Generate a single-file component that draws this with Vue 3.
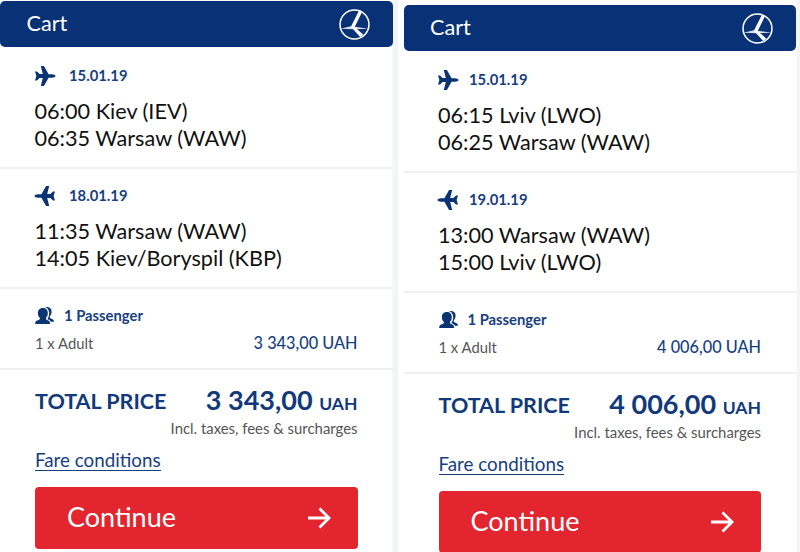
<template>
    <div class="page">
        <div v-for="cart in carts" :key="cart.id" class="cart">
            <div class="panel">
                <header class="head">
                    <span>Cart</span>
                    <svg class="logo" viewBox="0 0 30 30">
                        <circle cx="15" cy="15" r="14" fill="none" stroke="#fff" stroke-width="1.5" />
                        <path d="M19.3 1.8 L11.5 17.2 L20.5 27.2 L23.6 24.8 L15.2 17.4 L22.3 3 Z" fill="#fff" />
                        <path d="M1.5 19.2 L11.5 16.6 L17 17.4 L28.5 19.2 L14 19.6 Z" fill="#fff" opacity="0.85" />
                    </svg>
                </header>
                <section v-for="flight in cart.flights" :key="flight.date" class="flight">
                    <div class="label">
                        <svg class="plane" :class="{ back: flight.back }" viewBox="0 0 20 20">
                            <path :d="planePath" fill="#0b3475" />
                        </svg>
                        <span class="date">{{ flight.date }}</span>
                    </div>
                    <p v-for="stop in flight.stops" :key="stop">{{ stop }}</p>
                </section>
                <section class="passengers">
                    <div class="label">
                        <svg class="people" viewBox="0 0 19 17">
                            <path :d="backPersonPath" fill="#0b3475" />
                            <path :d="frontPersonPath" fill="#0b3475" />
                        </svg>
                        <span class="count">1 Passenger</span>
                    </div>
                    <div class="row">
                        <span class="adult">1 x Adult</span>
                        <span class="fare">{{ cart.price }} UAH</span>
                    </div>
                </section>
                <section class="total">
                    <div class="sum">
                        <span class="title">TOTAL PRICE</span>
                        <span class="amount">{{ cart.price }} <small>UAH</small></span>
                    </div>
                    <div class="note">Incl. taxes, fees &amp; surcharges</div>
                    <a class="conditions">Fare conditions</a>
                    <button class="continue">
                        <span>Continue</span>
                        <svg class="arrow" viewBox="0 0 24 22">
                            <path d="M1 11 H21.5 M12.5 1.5 L22 11 L12.5 20.5" fill="none" stroke="#fff" stroke-width="2.8" />
                        </svg>
                    </button>
                </section>
            </div>
        </div>
    </div>
</template>

<script setup>
import { ref } from "vue";

const carts = ref([
    {
        id: 1,
        price: "3 343,00",
        flights: [
            { date: "15.01.19", stops: ["06:00 Kiev (IEV)", "06:35 Warsaw (WAW)"] },
            { date: "18.01.19", back: true, stops: ["11:35 Warsaw (WAW)", "14:05 Kiev/Boryspil (KBP)"] },
        ],
    },
    {
        id: 2,
        price: "4 006,00",
        flights: [
            { date: "15.01.19", stops: ["06:15 Lviv (LWO)", "06:25 Warsaw (WAW)"] },
            { date: "19.01.19", back: true, stops: ["13:00 Warsaw (WAW)", "15:00 Lviv (LWO)"] },
        ],
    },
]);

const planePath =
    "M20.5 10 C20.5 10.9 18.5 11.7 17 11.7 H13.6 L8.9 20 H5.8 L7.8 12 H4.6 L2 14.6 H0 L1.4 10 L0 5.4 H2 L4.6 8 H7.8 L5.8 0 H8.9 L13.6 8.3 H17 C18.5 8.3 20.5 9.1 20.5 10 Z";
const frontPersonPath =
    "M8 0.9 C11.6 0.9 13 3.4 12.8 6.7 C12.7 8.9 11.6 10 10.9 11 C10.9 12.6 11.4 12.8 13.2 13.4 C14.7 13.9 15 15 15 17 H0.2 C0.2 15 0.6 13.9 2.1 13.4 C4.4 12.8 5 12.6 5 11 C3.8 10 3 8.7 2.9 6.5 C2.7 3.2 4.4 0.9 8 0.9 Z";
const backPersonPath =
    "M10.2 0.3 C13.6 -0.6 16.6 1 16.6 4.6 C16.6 7.2 15.6 8.6 14.6 9.8 C14.6 11 15.2 11.4 17 12 C18.5 12.6 18.9 13.3 18.9 14.8 H15.9 C15.2 12.9 13.5 12.6 12.4 12 C14.2 9 14.6 6.6 13.8 4 C13.2 2 11.8 0.8 10.2 0.3 Z";
</script>

<style>
body {
    background: #fff;
    overflow: hidden;
}
</style>

<style scoped>
.page {
    display: flex;
    align-items: flex-start;
    gap: 5.5px;
    width: 802px;
    height: 552px;
    overflow: hidden;
    font-family: Lato, "Open Sans", sans-serif;
    color: #111;
}
.cart {
    box-sizing: border-box;
    width: 398px;
    height: 552px;
    padding: 1px 5px 0 0;
    background: linear-gradient(to right, #fff 392px, #f3f4f8 393px);
    flex: none;
}
.cart + .cart {
    padding-top: 5px;
}
.panel {
    width: 392.5px;
}
.head {
    display: flex;
    align-items: center;
    justify-content: space-between;
    box-sizing: border-box;
    height: 46px;
    padding: 0 23px 0 26.5px;
    border-radius: 5px;
    background: #093276;
    color: #fff;
    font-size: 21.6px;
}
.head span {
    padding-bottom: 3px;
}
.logo {
    width: 31px;
    height: 31px;
}
.flight {
    box-sizing: border-box;
    height: 122px;
    padding: 18px 34.5px 0;
    border-bottom: 2px solid #f0f0f1;
}
.flight + .flight {
    height: 120px;
    padding-top: 16px;
}
.label {
    display: flex;
    align-items: center;
    height: 21px;
    color: #17407f;
    font-weight: bold;
    font-size: 14.8px;
}
.date {
    padding-bottom: 1px;
}
.plane {
    width: 20px;
    height: 20px;
    margin-right: 14.5px;
    overflow: visible;
}
.cart + .cart .plane {
    margin-right: 11px;
}
.plane.back {
    transform: scaleX(-1);
}
.flight .label {
    margin-bottom: 12px;
}
.flight p {
    margin: 0;
    font-size: 21.65px;
    line-height: 27px;
    white-space: nowrap;
}
.passengers {
    box-sizing: border-box;
    height: 81px;
    padding: 16px 35px 0;
    border-bottom: 2px solid #f0f0f1;
}
.people {
    width: 19px;
    height: 17px;
    margin-right: 10px;
}
.count {
    padding-bottom: 1px;
}
.row {
    display: flex;
    justify-content: space-between;
    align-items: baseline;
    height: 30px;
    line-height: 34px;
}
.adult {
    color: #555;
    font-size: 14.8px;
}
.fare {
    color: #17407f;
    font-size: 16.3px;
    font-weight: 500;
}
.total {
    padding: 13px 35px 0;
}
.sum {
    display: flex;
    justify-content: space-between;
    align-items: flex-start;
    height: 33px;
    line-height: 33px;
    color: #11397b;
    font-weight: bold;
    white-space: nowrap;
}
.title {
    padding-top: 2px;
    font-size: 21.5px;
}
.amount {
    font-size: 27px;
}
.amount small {
    font-size: 17.5px;
}
.note {
    height: 25px;
    line-height: 25px;
    text-align: right;
    color: #555;
    font-size: 14.9px;
}
.conditions {
    display: block;
    width: fit-content;
    height: 21px;
    margin-top: 8px;
    border-bottom: 1px solid #17407f;
    color: #17407f;
    font-size: 18.8px;
    line-height: 22px;
}
.continue {
    display: flex;
    align-items: center;
    justify-content: space-between;
    width: 100%;
    height: 62px;
    margin-top: 16.4px;
    padding: 0 27px 0 32px;
    border: none;
    border-radius: 4px;
    background: #e2252f;
    color: #fff;
    font-family: inherit;
    font-size: 27px;
}
.continue span {
    padding-bottom: 3px;
}
.arrow {
    width: 24px;
    height: 22px;
}
</style>
